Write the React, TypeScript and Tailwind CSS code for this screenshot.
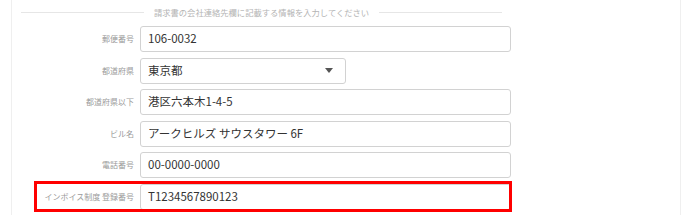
import React from 'react';

// 請求書の会社連絡先フォーム
const fields = [
  { label: '郵便番号', value: '106-0032', kind: 'input' },
  { label: '都道府県', value: '東京都', kind: 'select' },
  { label: '都道府県以下', value: '港区六本木1-4-5', kind: 'input' },
  { label: 'ビル名', value: 'アークヒルズ サウスタワー 6F', kind: 'input' },
  { label: '電話番号', value: '00-0000-0000', kind: 'input' },
  { label: 'インボイス制度 登録番号', value: 'T1234567890123', kind: 'input', highlight: true },
];

const FieldRow: React.FC<{ label: string; value: string; kind: string; highlight?: boolean }> = ({ label, value, kind, highlight }) => {
  return (
    <div className="relative flex items-center h-[26px]">
      <div className="w-[122px] text-right text-[8px] leading-none text-[#9a9a9a] whitespace-nowrap">{label}</div>
      <div className="ml-[6px]">
        {kind === 'select' ? (
          <div className="flex items-center justify-between w-[206px] h-[26px] border border-[#d2d2d2] rounded-[3px] bg-white pl-[7px] pr-[12px]">
            <span className="text-[11.5px] text-[#333]">{value}</span>
            <span className="w-0 h-0 border-l-[4.5px] border-r-[4.5px] border-t-[5px] border-l-transparent border-r-transparent border-t-[#555]" />
          </div>
        ) : (
          <div className="flex items-center w-[371px] h-[26px] border border-[#d2d2d2] rounded-[3px] bg-white pl-[7px]">
            <span className="text-[11.5px] text-[#333] whitespace-nowrap">{value}</span>
          </div>
        )}
      </div>
      {highlight && (
        <div className="absolute left-[22px] top-[-3px] w-[478px] h-[31px] border-[3px] border-[#ff0000] pointer-events-none" />
      )}
    </div>
  );
};

export default function App() {
  return (
    <div className="w-[688px] h-[215px] bg-white overflow-hidden font-['Noto_Sans_CJK_JP','Noto_Sans',sans-serif]">
      <div className="ml-[11px] w-[670px] h-full border-l border-r border-[#efefef] pt-[7px]">
        <div className="flex items-center ml-[9px] w-[481px] h-[11px]">
          <div className="flex-1 h-px bg-[#e6e6e6]" />
          <span className="px-[10px] text-[8.3px] leading-none text-[#b4b4b4] whitespace-nowrap">
            請求書の会社連絡先欄に記載する情報を入力してください
          </span>
          <div className="flex-1 h-px bg-[#e6e6e6]" />
        </div>
        <div className="mt-[8px] flex flex-col gap-[5.5px]">
          {fields.map(f => (
            <FieldRow key={f.label} label={f.label} value={f.value} kind={f.kind} highlight={f.highlight} />
          ))}
        </div>
      </div>
    </div>
  );
}
